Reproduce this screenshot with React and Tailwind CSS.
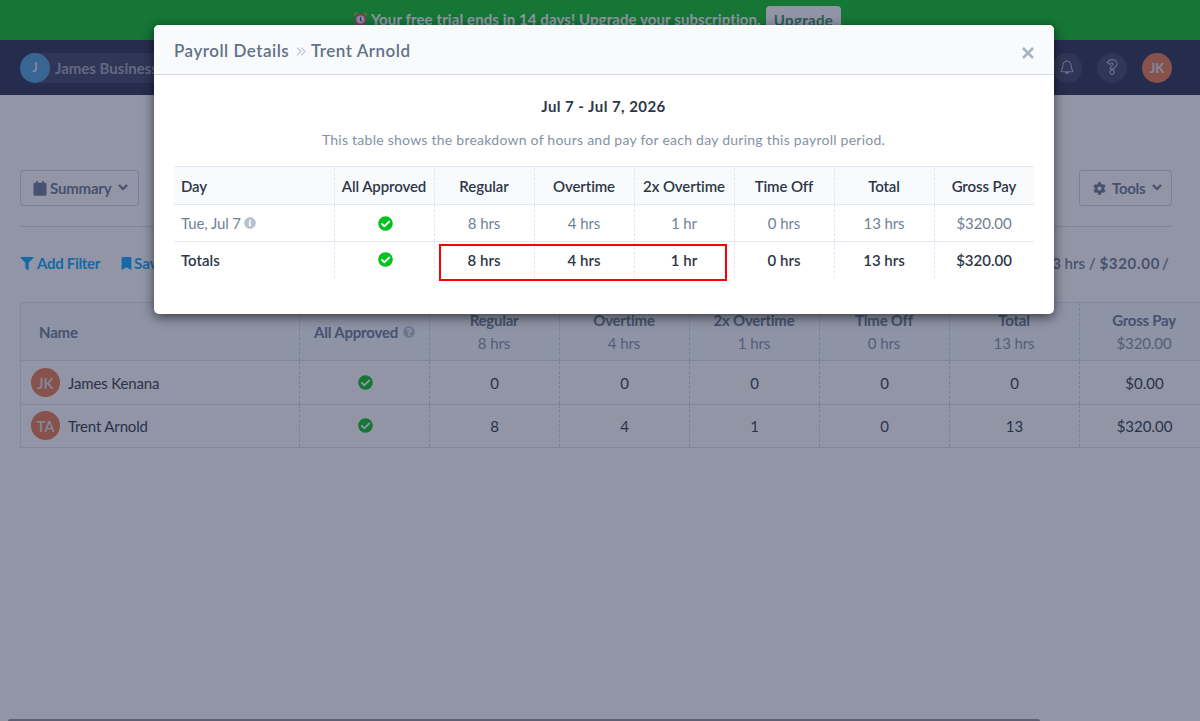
import React from 'react';
import clsx from 'clsx';
import {
  FaBookmark,
  FaCheckCircle,
  FaCog,
  FaFilter,
  FaInfoCircle,
  FaQuestionCircle,
} from 'react-icons/fa';

const columns = [
  { label: 'Regular', total: '8 hrs' },
  { label: 'Overtime', total: '4 hrs' },
  { label: '2x Overtime', total: '1 hrs' },
  { label: 'Time Off', total: '0 hrs' },
  { label: 'Total', total: '13 hrs' },
  { label: 'Gross Pay', total: '$320.00' },
];

const employees = [
  { initials: 'JK', name: 'James Kenana', values: ['0', '0', '0', '0', '0', '$0.00'] },
  { initials: 'TA', name: 'Trent Arnold', values: ['8', '4', '1', '0', '13', '$320.00'] },
];

const dayValues = ['8 hrs', '4 hrs', '1 hr', '0 hrs', '13 hrs', '$320.00'];

const AlarmIcon = () => (
  <svg className="w-[15px] h-[16px]" viewBox="0 0 15 16">
    <path d="M4 13l-1.5 2.5M11 13l1.5 2.5" stroke="#e8456b" strokeWidth="1.6" strokeLinecap="round" />
    <path d="M1 4.5C1 2 3 1 5 1.6L1.6 5zM14 4.5C14 2 12 1 10 1.6L13.4 5z" fill="#f0a030" />
    <circle cx="7.5" cy="8.7" r="5" fill="#e6e6f5" stroke="#e8456b" strokeWidth="1.8" />
    <path d="M7.5 6v3l1.3 1" fill="none" stroke="#3d3f55" strokeWidth="1.1" />
  </svg>
);

const CalendarIcon = () => (
  <svg className="w-[14px] h-[15px]" viewBox="0 0 14 15" fill="currentColor">
    <path d="M3 0h1.8v1.8h4.4V0H11v1.8h1.2c.8 0 1.3.5 1.3 1.3v10.4c0 .8-.5 1.3-1.3 1.3H1.8c-.8 0-1.3-.5-1.3-1.3V3.1c0-.8.5-1.3 1.3-1.3H3z" />
  </svg>
);

const ChevronIcon = () => (
  <svg className="w-[10px] h-[7px]" viewBox="0 0 10 7" fill="none" stroke="currentColor" strokeWidth="2.3">
    <path d="M.9 1l4.1 4L9.1 1" />
  </svg>
);

const CloseIcon = () => (
  <svg className="w-[12px] h-[12px]" viewBox="0 0 12 12" fill="none" stroke="#a9b4c2" strokeWidth="2.6">
    <path d="M1 1l10 10M11 1L1 11" />
  </svg>
);

const BellIcon = () => (
  <svg className="w-4 h-4 mb-[2px]" viewBox="0 0 16 16" fill="none" stroke="currentColor" strokeWidth="1.1" strokeLinejoin="round">
    <path d="M8 .8v1.4M8 2.2c-2.5 0-4.1 1.9-4.1 4.2 0 3.2-.8 4-1.7 4.9-.5.6-.2 1.4.6 1.4h10.4c.8 0 1.1-.8.6-1.4-.9-.9-1.7-1.7-1.7-4.9 0-2.3-1.6-4.2-4.1-4.2z" />
    <path d="M6.6 13.2c.2 1.6 2.6 1.6 2.8 0z" fill="currentColor" />
  </svg>
);

const QuestionIcon = () => (
  <svg className="w-4 h-4 mb-[2px]" viewBox="0 0 16 16" fill="none" stroke="currentColor" strokeWidth="1.15" strokeLinejoin="round">
    <path d="M3.2 3.6C4.3 1.6 6 .6 8.2.6c2.6 0 4.9 1.8 4.9 4.2 0 2.9-3.1 3.2-3.1 4.5v.5H6.3V9c0-2.5 3.1-2.7 3.1-4 0-.7-.7-1.1-1.4-1.1-1 0-1.5.5-2.2 1.4z" />
    <circle cx="8.1" cy="13.1" r="2.2" />
  </svg>
);

const Separator = () => (
  <svg className="w-[10px] h-[9px]" viewBox="0 0 10 9" fill="none" stroke="#bcc5d2" strokeWidth="1.2">
    <path d="M1 .7l3.8 3.8L1 8.3M5.2.7L9 4.5 5.2 8.3" />
  </svg>
);

const Avatar = ({ initials, className }) => (
  <div className={clsx('rounded-full flex items-center justify-center', className)}>
    {initials}
  </div>
);

const Approved = () => <FaCheckCircle className="ml-[2px] w-[15px] h-[15px] text-[#04c11e]" />;

const Banner = () => (
  <div className="h-10 bg-[#04c11e] flex items-start justify-center pt-1.5 pr-[6px]">
    <div className="h-[26px] flex items-center text-[15px] font-bold text-white whitespace-nowrap">
      <AlarmIcon />
      <span className="ml-[3px] w-[390px] tracking-[0.1px]">Your free trial ends in 14 days! Upgrade your subscription.</span>
    </div>
    <button className="ml-[5px] h-7 w-[75px] rounded bg-white text-[15px] font-bold text-[#2f8f65] tracking-[0.35px]">
      Upgrade
    </button>
  </div>
);

const Navbar = () => (
  <div className="h-[55px] bg-[#252c4e] flex items-center justify-between pl-5 pr-7">
    <div className="flex items-center h-[30px] w-[220px] rounded-full bg-[#3a4061]">
      <Avatar initials="J" className="w-[30px] h-[30px] pt-px bg-[#4b9fd6] text-[13px] font-bold text-[#dfe6f0]" />
      <span className="ml-[5px] pt-px text-[15px] font-bold text-[#a0a4ba]">James Business</span>
    </div>
    <div className="flex items-center gap-[15px] text-[#a9adc2]">
      <div className="w-[30px] h-[30px] rounded-full bg-[#3a4061] flex items-center justify-center">
        <BellIcon />
      </div>
      <div className="w-[30px] h-[30px] rounded-full bg-[#3a4061] flex items-center justify-center">
        <QuestionIcon />
      </div>
      <Avatar initials="JK" className="w-[30px] h-[30px] pt-[2px] bg-[#e8764a] text-[13px] font-bold text-[#e3e4ec]" />
    </div>
  </div>
);

const Toolbar = () => (
  <div className="ml-5 mr-7">
    <div className="flex justify-between pt-[75px] pb-5 border-b border-[#dbe3ed] text-[15px] font-bold text-[#677890]">
      <button className="h-9 w-[119px] border border-[#ccd6e2] rounded-[3px] flex items-center pl-[12px]">
        <CalendarIcon />
        <span className="ml-[3px] w-[62px] text-left tracking-[-0.2px]">Summary</span>
        <span className="ml-[6px] pb-[2px]"><ChevronIcon /></span>
      </button>
      <button className="h-9 w-[93px] border border-[#ccd6e2] rounded-[3px] flex items-center pl-[13px]">
        <FaCog className="w-[13px] h-[13px]" />
        <span className="ml-[6px] w-[33px] text-left tracking-[-0.3px]">Tools</span>
        <span className="ml-[7px] pb-[2px]"><ChevronIcon /></span>
      </button>
    </div>
    <div className="h-[73px] mb-[2px] flex items-center justify-between text-[15px] font-bold">
      <div className="flex items-center text-[#03a6ff]">
        <FaFilter className="w-[14px] h-[13px]" />
        <span className="ml-[3px] w-[64px] whitespace-nowrap tracking-[-0.3px]">Add Filter</span>
        <FaBookmark className="ml-5 w-[11px] h-[13px]" />
        <span className="ml-[2px]">Save</span>
      </div>
      <div className="pr-[3px] font-semibold text-[#677890]">
        13 hrs / <span className="font-bold tracking-[0.7px]">$320.00</span>
        <span className="ml-[2px]">/</span>
      </div>
    </div>
  </div>
);

const EmployeeTable = () => (
  <div className="ml-5 w-[1190px] border-l border-[#dbe6f0] rounded-tl-[4px] text-[15px]">
    <div className="h-[59px] flex bg-[#f7fafc] border-y border-[#dbe6f0] rounded-tl-[4px] text-[#677890]">
      <div className="w-[278px] pl-[18px] pt-px flex items-center font-bold tracking-[-0.2px]">Name</div>
      <div className="w-[130px] pt-px border-l border-dashed border-[#ccd6e2] flex items-center justify-center font-bold tracking-[-0.2px] whitespace-nowrap">
        All Approved <FaQuestionCircle className="ml-[5px] w-3 h-3 text-[#b9c3d0]" />
      </div>
      {columns.map((col) => (
        <div key={col.label} className="w-[130px] pr-px border-l border-dashed border-[#ccd6e2] flex flex-col items-center pt-[6px] leading-[23px]">
          <span className="font-bold tracking-[-0.25px]">{col.label}</span>
          <span className="text-[#8391a7] tracking-[-0.1px]">{col.total}</span>
        </div>
      ))}
    </div>
    {employees.map((emp) => (
      <div key={emp.name} className="h-[43.5px] flex border-b border-[#dbe6f0] text-[#2d3748]">
        <div className="w-[278px] pl-[10px] flex items-center">
          <Avatar initials={emp.initials} className="w-[29px] h-[29px] pt-px bg-[#e8764a] text-[15px] font-semibold text-[#e3e4ec]" />
          <span className="ml-[8px] pt-px tracking-[-0.15px]">{emp.name}</span>
        </div>
        <div className="w-[130px] border-l border-dashed border-[#ccd6e2] flex items-center justify-center">
          <Approved />
        </div>
        {emp.values.map((value, i) => (
          <div key={i} className="w-[130px] pt-px border-l border-dashed border-[#ccd6e2] flex items-center justify-center">
            {value}
          </div>
        ))}
      </div>
    ))}
  </div>
);

const ModalRow = ({ first, approved, values, className }) => (
  <div className={clsx('flex', className)}>
    <div className="w-[160px] pl-[7px] flex items-center">{first}</div>
    {[approved, ...values].map((value, i) => (
      <div key={i} className="w-[100px] pr-px border-l border-dashed border-[#e2e8f0] flex items-center justify-center whitespace-nowrap">
        {value}
      </div>
    ))}
  </div>
);

const PayrollModal = () => (
  <div className="w-[900px] h-[289px] bg-white rounded-[5px] overflow-hidden shadow-[0_3px_12px_rgba(0,0,0,0.6)]">
    <div className="h-[50px] pl-5 pr-5 flex items-center justify-between bg-[#f9fafc] border-b border-[#d5dbe8]">
      <h2 className="flex items-center pt-[3px] text-[17px] font-semibold text-[#627287] whitespace-nowrap tracking-[0.5px]">
        <span className="w-[115px]">Payroll Details</span>
        <span className="ml-[7px] mr-[5px]"><Separator /></span>
        <span>Trent Arnold</span>
      </h2>
      <button className="pt-[7px]">
        <CloseIcon />
      </button>
    </div>
    <div className="px-5">
      <h3 className="pt-[20px] pr-px text-center text-[15px] leading-[22px] font-bold text-[#2d3748] tracking-[0.45px]">
        Jul 7 - Jul 7, 2026
      </h3>
      <p className="mt-3 pr-px text-center text-[14px] leading-[22px] text-[#8492a6] tracking-[0.25px]">
        This table shows the breakdown of hours and pay for each day during this payroll period.
      </p>
      <div className="relative mt-[15px] text-[15px]">
        <ModalRow
          first="Day"
          approved="All Approved"
          values={columns.map((col) => col.label)}
          className="h-[39px] bg-[#f9fafc] border-y border-[#e2e8f0] pt-px font-semibold text-[#2d3748] tracking-[-0.1px]"
        />
        <ModalRow
          first={<>Tue, Jul 7 <FaInfoCircle className="ml-[3px] w-3 h-3 text-[#b8c2ce]" /></>}
          approved={<Approved />}
          values={dayValues}
          className="h-[37px] border-b border-[#e2e8f0] text-[#718096] tracking-[-0.1px]"
        />
        <ModalRow
          first="Totals"
          approved={<span className="pb-[2px]"><Approved /></span>}
          values={dayValues}
          className="h-[36px] font-semibold text-[#2d3748]"
        />
        {/* Highlight over the hour totals */}
        <div className="absolute left-[265px] top-[78px] w-[288px] h-[37px] border-2 border-[#ff0000]" />
      </div>
    </div>
  </div>
);

const App = () => (
  <div className="relative w-[1200px] h-[721px] overflow-hidden bg-white font-['Lato','Liberation_Sans',sans-serif]">
    <div className="h-full flex flex-col">
      <Banner />
      <Navbar />
      <Toolbar />
      <EmployeeTable />
      <div className="mt-auto ml-2 w-[1032px] h-[2px] rounded-t-sm bg-[#93939a]" />
    </div>
    <div className="absolute inset-0 bg-[#252c4e]/50 flex items-start justify-center pt-[25px] pl-2">
      <PayrollModal />
    </div>
  </div>
);

export default App;
